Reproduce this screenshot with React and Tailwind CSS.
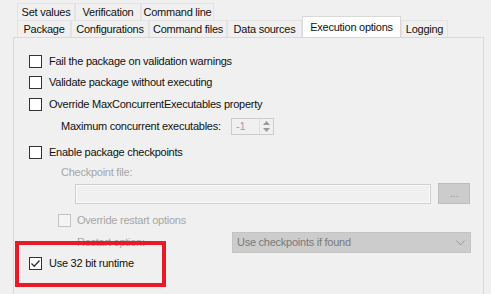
import React from 'react';

function Check({ checked, disabled }) {
  return (
    <span
      className={
        'flex h-[13px] w-[13px] shrink-0 items-center justify-center border ' +
        (disabled ? 'border-[#c4c4c4] bg-[#f4f4f4]' : 'border-[#333333] bg-white')
      }
    >
      {checked && (
        <svg width="11" height="11" viewBox="0 0 11 11">
          <path d="M1.5 5.5 L4.2 8.3 L9.5 2.5" fill="none" stroke="#333" strokeWidth="1.3" />
        </svg>
      )}
    </span>
  );
}

function Tab({ label, w, selected }) {
  if (selected) {
    return (
      <div
        className={`${w} -mt-[3px] flex h-[21px] items-center justify-center border border-b-0 border-[#d9d9d9] bg-white`}
      >
        {label}
      </div>
    );
  }
  return (
    <div className={`${w} flex h-[17px] items-center justify-center border border-b-0 border-[#e3e3e3] bg-[#f0f0f0]`}>
      {label}
    </div>
  );
}

export default function App() {
  return (
    <div
      className="relative h-[294px] w-[491px] overflow-hidden bg-[#f0f0f0] text-[11px] tracking-[-0.25px] text-[#111]"
      style={{ fontFamily: '"Liberation Sans", Arial, sans-serif' }}
    >
      {/* tab rows */}
      <div className="flex pl-[17px] pt-[3px]">
        <Tab label="Set values" w="w-[58px]" />
        <Tab label="Verification" w="w-[66px]" />
        <Tab label="Command line" w="w-[73px]" />
      </div>
      <div className="flex h-[17px] items-end pl-[17px]">
        <Tab label="Package" w="w-[54px]" />
        <Tab label="Configurations" w="w-[78px]" />
        <Tab label="Command files" w="w-[78px]" />
        <Tab label="Data sources" w="w-[75px]" />
        <Tab label="Execution options" w="w-[99px]" selected />
        <Tab label="Logging" w="w-[47px]" />
      </div>

      {/* panel */}
      <div className="ml-[13px] h-[260px] w-[471px] border border-[#d9d9d9] bg-[#f0f0f0] pl-[15px] pt-[13px]">
        <div className="flex h-[21px] items-center gap-[7px]">
          <Check />
          <span>Fail the package on validation warnings</span>
        </div>
        <div className="flex h-[21px] items-center gap-[7px]">
          <Check />
          <span>Validate package without executing</span>
        </div>
        <div className="flex h-[22px] items-center gap-[7px]">
          <Check />
          <span>Override MaxConcurrentExecutables property</span>
        </div>
        <div className="flex h-[22px] items-center pl-[32px]">
          <span className="w-[170px]">Maximum concurrent executables:</span>
          <div className="flex h-[17px] w-[43px] items-center border border-[#cccccc] bg-[#f0f0f0]">
            <span className="flex-1 pl-[4px] text-[#a0a0a0]">-1</span>
            <div className="flex h-full w-[14px] flex-col items-center justify-center gap-[3px] border-l border-[#e0e0e0]">
              <svg width="7" height="4" viewBox="0 0 7 4"><path d="M0 4 L3.5 0 L7 4Z" fill="#9a9a9a" /></svg>
              <svg width="7" height="4" viewBox="0 0 7 4"><path d="M0 0 L3.5 4 L7 0Z" fill="#9a9a9a" /></svg>
            </div>
          </div>
        </div>

        <div className="mt-[5px] flex h-[20px] items-center gap-[7px]">
          <Check />
          <span>Enable package checkpoints</span>
        </div>
        <div className="mt-[2px] flex h-[16px] items-center pl-[32px] text-[#a6a6a6]">Checkpoint file:</div>
        <div className="mt-[3px] flex h-[21px] items-center pl-[46px]">
          <div className="h-[20px] w-[356px] border border-[#cfcfcf] bg-[#f0f0f0] shadow-[inset_0_0_0_1px_#fafafa]" />
          <div className="ml-[7px] flex h-[21px] w-[32px] items-center justify-center border border-[#bdbdbd] bg-[#cccccc] text-[#9a9a9a]">
            ...
          </div>
        </div>

        <div className="mt-[7px] flex h-[18px] items-center gap-[6px] pl-[29px] text-[#a6a6a6]">
          <Check disabled />
          <span>Override restart options</span>
        </div>
        <div className="mt-[3px] flex h-[21px] items-center pl-[48px]">
          <span className="w-[155px] text-[#a6a6a6]">Restart option:</span>
          <div className="flex h-[21px] w-[239px] items-center justify-between border border-[#c4c4c4] bg-[#cccccc] pl-[4px] pr-[5px] text-[#7a7a7a]">
            <span>Use checkpoints if found</span>
            <svg width="9" height="6" viewBox="0 0 9 6"><path d="M0.5 0.5 L4.5 5 L8.5 0.5" fill="none" stroke="#9a9a9a" strokeWidth="1" /></svg>
          </div>
        </div>
        <div className="mt-[1px] flex h-[18px] items-center gap-[7px]">
          <Check checked />
          <span>Use 32 bit runtime</span>
        </div>
      </div>

      {/* annotation */}
      <div className="absolute left-[15px] top-[241px] h-[46px] w-[151px] border-[4px] border-[#e81a27]" />
    </div>
  );
}
